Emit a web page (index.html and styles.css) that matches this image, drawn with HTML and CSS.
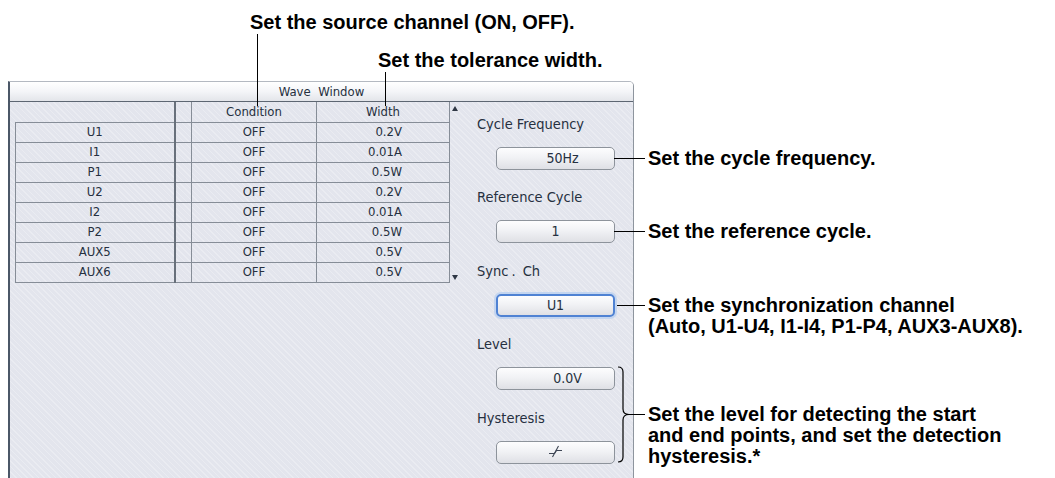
FILE: index.html
```html
<!DOCTYPE html>
<html lang="en">

<head>
    <meta charset="UTF-8">
    <meta name="viewport" content="width=device-width, initial-scale=1.0">
    <title>Wave Window</title>
    <link rel="stylesheet" href="styles.css">
</head>

<body>
    <div class="top">
        <p class="top-src">Set the source channel (ON, OFF).</p>
        <p class="top-tol">Set the tolerance width.</p>
        <span class="leader leader-src"></span>
        <span class="leader leader-tol"></span>
    </div>
    <div class="main">
        <div class="window">
            <div class="titlebar">Wave&nbsp; Window</div>
            <div class="content">
                <div class="list">
                    <table class="grid">
                        <colgroup>
                            <col class="c-name">
                            <col class="c-gap">
                            <col class="c-cond">
                            <col class="c-width">
                        </colgroup>
                        <thead>
                            <tr>
                                <th class="blank"></th>
                                <th class="gap"></th>
                                <th>Condition</th>
                                <th>Width</th>
                            </tr>
                        </thead>
                        <tbody>
                            <tr><td>U1</td><td class="gap"></td><td>OFF</td><td class="val">0.2V</td></tr>
                            <tr><td>I1</td><td class="gap"></td><td>OFF</td><td class="val">0.01A</td></tr>
                            <tr><td>P1</td><td class="gap"></td><td>OFF</td><td class="val">0.5W</td></tr>
                            <tr><td>U2</td><td class="gap"></td><td>OFF</td><td class="val">0.2V</td></tr>
                            <tr><td>I2</td><td class="gap"></td><td>OFF</td><td class="val">0.01A</td></tr>
                            <tr><td>P2</td><td class="gap"></td><td>OFF</td><td class="val">0.5W</td></tr>
                            <tr><td>AUX5</td><td class="gap"></td><td>OFF</td><td class="val">0.5V</td></tr>
                            <tr><td>AUX6</td><td class="gap"></td><td>OFF</td><td class="val">0.5V</td></tr>
                        </tbody>
                    </table>
                    <div class="scroll">
                        <span class="arrow up"></span>
                        <span class="arrow down"></span>
                    </div>
                </div>
                <div class="panel">
                    <div class="field">
                        <div class="label">Cycle Frequency</div>
                        <div class="btn shift">50Hz</div>
                    </div>
                    <div class="field">
                        <div class="label">Reference Cycle</div>
                        <div class="btn">1</div>
                    </div>
                    <div class="field">
                        <div class="label">Sync<span class="dot">.</span> Ch</div>
                        <div class="btn focus">U1</div>
                    </div>
                    <div class="field">
                        <div class="label">Level</div>
                        <div class="btn shift-more">0.0V</div>
                    </div>
                    <div class="field">
                        <div class="label">Hysteresis</div>
                        <div class="btn">
                            <svg class="hys" width="15" height="13" viewBox="0 0 15 13">
                                <path d="M1 8.5 H6.5 L8.5 5.5 H14" fill="none" stroke="#3d4554" stroke-width="1.1"/>
                                <path d="M4.5 12 L10.5 1" fill="none" stroke="#3d4554" stroke-width="1.1"/>
                            </svg>
                        </div>
                    </div>
                </div>
            </div>
        </div>
        <div class="notes">
            <p class="note note-freq">Set the cycle frequency.</p>
            <p class="note note-ref">Set the reference cycle.</p>
            <p class="note note-sync">Set the synchronization channel<br>(Auto, U1-U4, I1-I4, P1-P4, AUX3-AUX8).</p>
            <p class="note note-level">
                <svg class="brace" width="29" height="97" viewBox="0 0 29 97">
                    <path d="M2 1 Q7 1 7 6 L7 43 Q7 48.5 13 48.5 Q7 48.5 7 54 L7 91 Q7 96 2 96" fill="none" stroke="#000" stroke-width="1.2"/>
                    <path d="M13 48.5 H29" stroke="#000" stroke-width="1"/>
                </svg>
                Set the level for detecting the start<br>and end points, and set the detection<br>hysteresis.*
            </p>
        </div>
    </div>
</body>

</html>
```

FILE: styles.css
```css
html,body{
    margin: 0;
    padding: 0;
}
body{
    width: 1055px;
    height: 478px;
    overflow: hidden;
    background-color: #fff;
    font-family: "Liberation Sans", Arial, sans-serif;
}
/* top callouts */
.top{
    position: relative;
    height: 81px;
}
.top p{
    margin: 0;
    font-size: 20px;
    font-weight: bold;
    line-height: 24px;
    white-space: nowrap;
}
.top-src{
    padding: 10px 0 0 250px;
}
.top-tol{
    padding-left: 378px;
    margin-top: 14px !important;
}
.leader{
    position: absolute;
    width: 1px;
    background-color: #000;
    z-index: 2;
}
.leader-src{
    left: 257px;
    top: 34px;
    height: 72px;
}
.leader-tol{
    left: 385px;
    top: 72px;
    height: 34px;
}
/* window */
.main{
    display: flex;
    padding-left: 8px;
    height: 397px;
}
.window{
    flex: none;
    width: 626px;
    display: flex;
    flex-direction: column;
    box-sizing: border-box;
    border-left: 2px solid #4b5767;
    border-right: 1px solid #8e959e;
    border-top: 1px solid #b4b9c1;
    border-top-right-radius: 5px;
    overflow: hidden;
    font-family: "DejaVu Sans Condensed", "DejaVu Sans", sans-serif;
    color: #263040;
}
.titlebar{
    height: 19px;
    line-height: 19px;
    border-bottom: 1px solid #5d6672;
    background: linear-gradient(#ffffff, #f4f5f8 50%, #e3e5ea);
    text-align: center;
    font-size: 13px;
}
.content{
    flex: 1;
    display: flex;
    background-color: #e3e5ed;
    background-image: repeating-linear-gradient(45deg, rgba(255,255,255,0.25) 0 1px, transparent 1px 4px);
}
.list{
    display: flex;
    align-items: flex-start;
    padding-left: 5px;
}
.grid{
    border-collapse: collapse;
    table-layout: fixed;
    width: 434px;
    font-size: 13px;
}
.c-name{ width: 159px; }
.c-gap{ width: 17px; }
.c-cond{ width: 125px; }
.c-width{ width: 133px; }
.grid tr{
    height: 20px;
}
.grid th,.grid td{
    padding: 0;
    border: 1px solid #868d97;
    text-align: center;
    font-weight: normal;
    line-height: 18px;
}
.grid th{
    border-top: none;
}
.grid th.blank{
    border: none;
}
.grid .gap{
    border-left: 2px solid #68707b;
}
.grid td.val{
    text-align: right;
    padding-right: 47px;
}
.scroll{
    width: 9px;
    height: 181px;
    display: flex;
    flex-direction: column;
    justify-content: space-between;
    align-items: center;
    padding: 4px 0 3px;
    box-sizing: border-box;
}
.arrow{
    width: 0;
    height: 0;
    border-left: 3px solid transparent;
    border-right: 3px solid transparent;
}
.arrow.up{
    border-bottom: 5px solid #2f3745;
}
.arrow.down{
    border-top: 5px solid #2f3745;
}
/* right panel */
.panel{
    flex: 1;
    padding: 10.5px 0 0 18px;
}
.field + .field{
    margin-top: 16.6px;
}
.label{
    height: 23px;
    line-height: 23px;
    font-size: 14.5px;
    white-space: nowrap;
}
.label .dot{
    margin: 0 3px;
}
.btn{
    width: 119px;
    height: 23px;
    margin: 11px 0 0 19px;
    box-sizing: border-box;
    border: 1px solid #8d939b;
    border-radius: 5px;
    background: linear-gradient(#fdfdfe, #f1f2f5 45%, #dfe0e5);
    text-align: center;
    font-size: 14px;
    line-height: 21px;
}
.btn.shift{
    padding-left: 14px;
}
.btn.shift-more{
    padding-left: 24px;
}
.btn.focus{
    border: 2px solid #4f82d3;
    box-shadow: 0 0 0 2px #c3d5f0;
    line-height: 19px;
}
.hys{
    display: inline-block;
    vertical-align: middle;
    margin-top: -2px;
}
/* right callouts */
.notes{
    flex: 1;
    padding-left: 14px;
    font-size: 20px;
    font-weight: bold;
    line-height: 21px;
}
.note{
    position: relative;
    margin: 0;
    white-space: nowrap;
}
.note::before{
    content: "";
    position: absolute;
    left: -34px;
    top: 10px;
    width: 31px;
    height: 1px;
    background-color: #000;
}
.note-freq{ margin-top: 66.5px; }
.note-ref{ margin-top: 52.5px; }
.note-sync{ margin-top: 52.5px; }
.note-sync::before{
    left: -31px;
    width: 28px;
}
.note-level{ margin-top: 67.5px; }
.note-level::before{
    display: none;
}
.brace{
    position: absolute;
    left: -32px;
    top: -38px;
}
```
